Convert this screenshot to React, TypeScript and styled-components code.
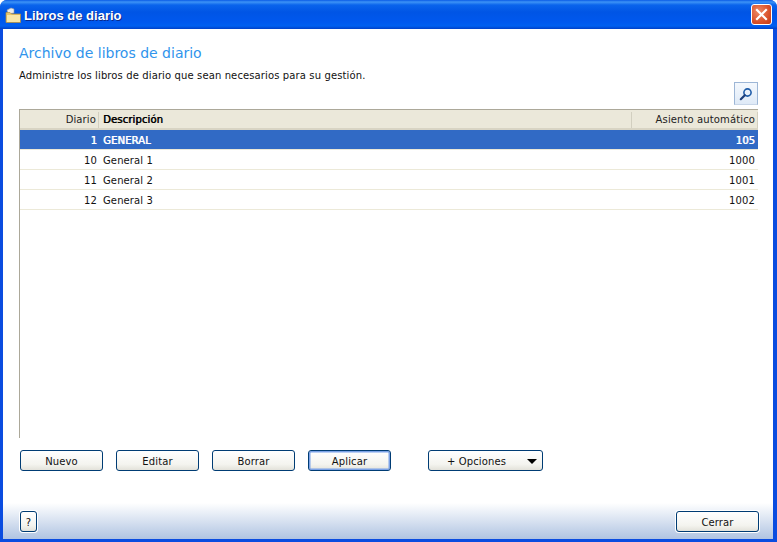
import * as React from 'react';
import styled, { createGlobalStyle } from 'styled-components';

const GlobalStyle = createGlobalStyle`
  html, body {
    margin: 0;
    padding: 0;
    background: #fff;
    overflow: hidden;
  }
  * { box-sizing: border-box; }
`;

const uiFont = `"DejaVu Sans", Verdana, sans-serif`;

const Window = styled.div`
  width: 777px;
  height: 542px;
  display: flex;
  flex-direction: column;
  border-radius: 7px 7px 0 0;
  background: #0a4ce0;
  font-family: ${uiFont};
  font-size: 10px;
  letter-spacing: 0.12px;
  color: #111;
  overflow: hidden;
`;

const TitleBar = styled.div`
  height: 29px;
  flex: none;
  display: flex;
  align-items: center;
  padding: 0 5px 0 5px;
  gap: 2px;
  background: linear-gradient(to bottom, #0a5be6 0, #3d93f6 2px, #0a64ec 5px, #0055e5 12px, #0058ee 22px, #0060f0 26px, #0040c8 29px);
`;

const TitleIcon = styled.div`
  display: flex;
  padding-top: 1px;
`;

const TitleText = styled.span`
  flex: 1;
  padding-top: 2px;
  font-family: "Liberation Sans", Arial, sans-serif;
  font-weight: 700;
  font-size: 13px;
  letter-spacing: 0;
  color: #fff;
  text-shadow: 1px 1px 0 #0a2a8c;
`;

const CloseButton = styled.div`
  width: 21px;
  height: 21px;
  display: flex;
  align-items: center;
  justify-content: center;
  border: 1px solid #fff;
  border-radius: 3px;
  background: radial-gradient(circle at 35% 35%, #ee8a66, #d9512a 60%, #c23a17);
`;

const Body = styled.div`
  flex: 1;
  margin: 0 4px 3px 3px;
  display: flex;
  flex-direction: column;
  background: #fff;
  min-height: 0;
`;

const Content = styled.div`
  flex: 1;
  display: flex;
  flex-direction: column;
  padding: 15px 0 0 16px;
  min-height: 0;
`;

const Heading = styled.h1`
  margin: 0;
  font-family: ${uiFont};
  font-weight: 400;
  font-size: 14px;
  line-height: 18px;
  letter-spacing: 0;
  color: #3094ec;
`;

const Intro = styled.p`
  margin: 7px 0 0;
  font-size: 10px;
  line-height: 14px;
`;

const SearchRow = styled.div`
  display: flex;
  justify-content: flex-end;
  padding-right: 15px;
  margin-top: -1px;
  height: 27px;
`;

const SearchButton = styled.div`
  width: 24px;
  height: 23px;
  display: flex;
  align-items: center;
  justify-content: center;
  border: 1px solid #9db6d6;
  border-bottom-color: #c8d6e8;
  background: linear-gradient(to bottom, #f4f8fd, #dfeaf7);
`;

const Table = styled.div`
  width: 739px;
  height: 329px;
  flex: none;
  border-left: 1px solid #aca899;
`;

const Row = styled.div<{ $selected?: boolean }>`
  display: grid;
  grid-template-columns: 79px 1fr 121px;
  height: 20px;
  padding-top: 2px;
  align-items: center;
  border-bottom: 1px solid #ece9d8;
  background: ${(p) => (p.$selected ? '#316ac5' : '#fff')};
  color: ${(p) => (p.$selected ? '#fff' : '#111')};
  text-shadow: ${(p) => (p.$selected ? '0.6px 0 0 currentColor' : 'none')};
`;

const HeaderRow = styled(Row)`
  height: 21px;
  padding-top: 2px;
  border-top: 1px solid #aca899;
  border-bottom: 2px solid #d8d4c4;
  background: #ebe8da;
  color: #222;
  grid-template-columns: 79px 1fr 126px;
`;

const Cell = styled.div<{ $right?: boolean; $bold?: boolean; $divider?: boolean }>`
  padding: 0 ${(p) => (p.$right ? '2px' : '0')} 0 ${(p) => (p.$right ? '0' : '4px')};
  text-align: ${(p) => (p.$right ? 'right' : 'left')};
  text-shadow: ${(p) => (p.$bold ? '0.6px 0 0 currentColor' : 'inherit')};
  color: ${(p) => (p.$bold ? '#000' : 'inherit')};
  line-height: 16px;
  white-space: nowrap;
  border-right: ${(p) => (p.$divider ? '1px solid #d2cfc0' : 'none')};
`;

const SeatCell = styled(Cell)`
  padding-right: 3px;
`;

const ActionRow = styled.div`
  display: flex;
  margin-top: 12px;
  padding-left: 1px;
  gap: 13px;
`;

const Button = styled.div<{ $width?: number; $focused?: boolean }>`
  width: ${(p) => p.$width ?? 83}px;
  height: 21px;
  padding-top: 1px;
  display: flex;
  align-items: center;
  justify-content: center;
  border: 1px solid #003c74;
  border-radius: 3px;
  background: linear-gradient(to bottom, #fff, #f4f4ef 70%, #e3e2da);
  box-shadow: ${(p) => (p.$focused ? 'inset 0 0 0 1.5px #7ba2e7' : 'none')};
  font-size: 10px;
  color: #111;
`;

const OptionsButton = styled(Button)`
  margin-left: 24px;
  padding: 1px 5px 0 18px;
  justify-content: space-between;
`;

const Arrow = styled.span`
  width: 0;
  height: 0;
  border-left: 5px solid transparent;
  border-right: 5px solid transparent;
  border-top: 5px solid #000;
`;

const Footer = styled.div`
  height: 36px;
  flex: none;
  display: flex;
  align-items: flex-start;
  justify-content: space-between;
  padding: 8px 14px 0 17px;
  background: linear-gradient(to bottom, #fff, #b0c4e2);
`;

const FooterButton = styled(Button)`
  box-shadow: 0 0 0 1px #fff;
`;

const HelpButton = styled(FooterButton)`
  width: 17px;
`;

const FolderIcon = () => (
  <svg width="17" height="17" viewBox="0 0 17 17">
    <path d="M2 3 L6 1 L9 2 L9 6 L3 7 Z" fill="#ececec" stroke="#9a9a9a" strokeWidth="0.6" />
    <path d="M1 5.5 H5 L6.5 7 H15.5 V15.5 H1 Z" fill="#e8c56c" stroke="#b8923e" strokeWidth="0.7" />
    <path d="M2 8 H15 V15 H2 Z" fill="#f8e6a8" />
  </svg>
);

const CloseIcon = () => (
  <svg width="13" height="13" viewBox="0 0 13 13">
    <path d="M2 2 L11 11 M11 2 L2 11" stroke="#fff" strokeWidth="2.2" strokeLinecap="square" />
  </svg>
);

const SearchIcon = () => (
  <svg width="14" height="14" viewBox="0 0 14 14" fill="none">
    <circle cx="8.5" cy="5.5" r="3.6" stroke="#1f5ca8" strokeWidth="1.6" />
    <path d="M5.8 8.2 L1.8 12.2" stroke="#1d3f7c" strokeWidth="2.2" strokeLinecap="round" />
  </svg>
);

const rows = [
  { id: 1, name: 'GENERAL', seat: 105 },
  { id: 10, name: 'General 1', seat: 1000 },
  { id: 11, name: 'General 2', seat: 1001 },
  { id: 12, name: 'General 3', seat: 1002 },
];

const App = () => (
  <>
    <GlobalStyle />
    <Window>
      <TitleBar>
        <TitleIcon>
          <FolderIcon />
        </TitleIcon>
        <TitleText>Libros de diario</TitleText>
        <CloseButton>
          <CloseIcon />
        </CloseButton>
      </TitleBar>
      <Body>
        <Content>
          <Heading>Archivo de libros de diario</Heading>
          <Intro>Administre los libros de diario que sean necesarios para su gestión.</Intro>
          <SearchRow>
            <SearchButton>
              <SearchIcon />
            </SearchButton>
          </SearchRow>
          <Table>
            <HeaderRow>
              <Cell $right $divider>Diario</Cell>
              <Cell $bold $divider>Descripción</Cell>
              <Cell $right $divider>Asiento automático</Cell>
            </HeaderRow>
            {rows.map((row, i) => (
              <Row key={row.id} $selected={i === 0}>
                <Cell $right>{row.id}</Cell>
                <Cell>{row.name}</Cell>
                <SeatCell $right>{row.seat}</SeatCell>
              </Row>
            ))}
          </Table>
          <ActionRow>
            <Button>Nuevo</Button>
            <Button>Editar</Button>
            <Button>Borrar</Button>
            <Button $focused>Aplicar</Button>
            <OptionsButton $width={115}>
              + Opciones
              <Arrow />
            </OptionsButton>
          </ActionRow>
        </Content>
        <Footer>
          <HelpButton>?</HelpButton>
          <FooterButton>Cerrar</FooterButton>
        </Footer>
      </Body>
    </Window>
  </>
);

export default App;
